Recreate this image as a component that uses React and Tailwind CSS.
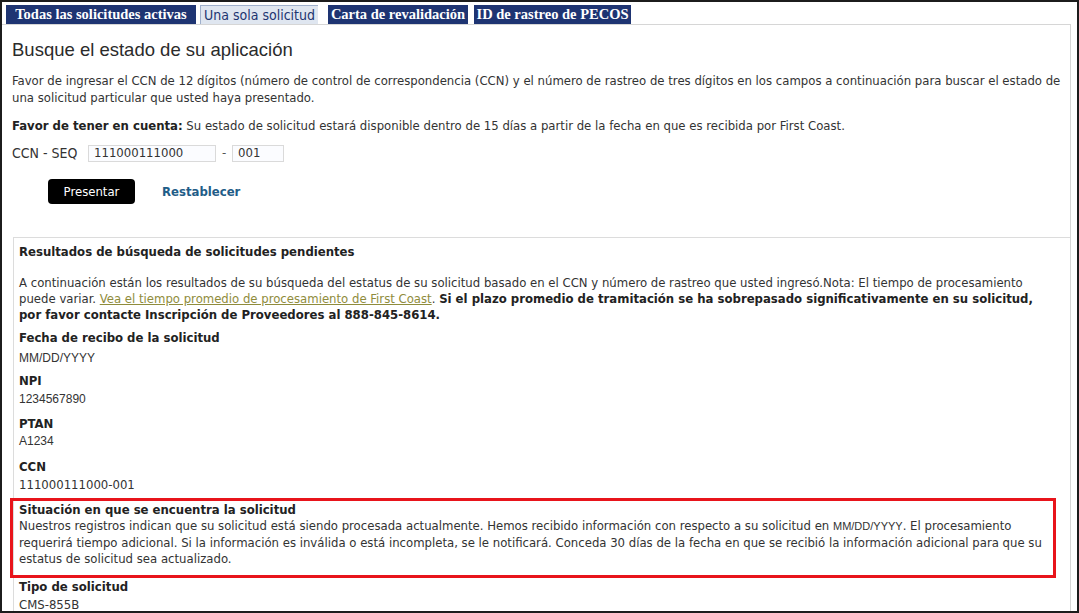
import React from "react";

const TABS = [
  { label: "Todas las solicitudes activas", w: "w-[190px]", active: false },
  { label: "Una sola solicitud", w: "w-[118px]", active: true },
  { label: "Carta de revalidación", w: "w-[140px]", active: false },
  { label: "ID de rastreo de PECOS", w: "w-[157px]", active: false },
];

const Field = ({ label, value, arial, top, gap }) => (
  <div className={top}>
    <div className="font-bold text-[13px] leading-[17px] text-[#222]">{label}</div>
    <div
      className={`${gap} text-[#333] leading-[17px] ${
        arial ? "font-['Liberation_Sans',sans-serif] text-[12px]" : "text-[13px]"
      }`}
    >
      {value}
    </div>
  </div>
);

export default function App() {
  return (
    <div className="w-[1079px] h-[613px] overflow-hidden bg-white border-2 border-[#1c1c1c] font-['DejaVu_Sans_Condensed','Liberation_Sans',sans-serif] text-[13px] text-[#333]">
      {/* tabs */}
      <div className="flex h-[22px] pt-[3px] pl-[4px]">
        {TABS.map((t, i) => (
          <div
            key={i}
            className={`${t.w} h-[19px] flex items-center justify-center whitespace-nowrap ${
              i === 1 ? "ml-[4px]" : i === 2 ? "ml-[10px]" : i === 3 ? "ml-[6px]" : ""
            } ${
              t.active
                ? "bg-[#dfe6f0] text-[#1d3570] border-l border-t border-[#9fb0cc] text-[14px]"
                : "bg-[#1e3472] text-white font-bold font-['Liberation_Serif',serif] text-[14.5px]"
            }`}
          >
            {t.label}
          </div>
        ))}
      </div>

      <div className="border-t border-r border-[#d6d6d6] mr-[6px] h-full">
        {/* search form */}
        <div className="pl-[10px]">
          <h1 className="mt-[14px] font-['Liberation_Sans',sans-serif] text-[18.5px] leading-[22px] text-[#2b2b2b]">
            Busque el estado de su aplicación
          </h1>
          <p className="mt-[11px] leading-[17px] pr-[4px]">
            Favor de ingresar el CCN de 12 dígitos (número de control de correspondencia (CCN) y el número de rastreo de tres dígitos en los campos a continuación para buscar el estado de una solicitud particular que usted haya presentado.
          </p>
          <p className="mt-[11px] leading-[17px]">
            <span className="font-bold text-[#222]">Favor de tener en cuenta:</span> Su estado de solicitud estará disponible dentro de 15 días a partir de la fecha en que es recibida por First Coast.
          </p>
          <div className="mt-[10px] flex items-center h-[18px]">
            <span className="w-[76px] text-[14px]">CCN - SEQ</span>
            <input
              readOnly
              value="111000111000"
              className="w-[128px] h-[17px] border border-[#dadada] bg-[#fbfcff] px-[5px] text-[13px] text-[#333] outline-none"
            />
            <span className="w-[16px] text-center text-[#555]">-</span>
            <input
              readOnly
              value="001"
              className="w-[52px] h-[17px] border border-[#dadada] bg-[#fbfcff] px-[5px] text-[13px] text-[#333] outline-none"
            />
          </div>
          <div className="mt-[17px] flex items-center">
            <button className="ml-[36px] w-[87px] h-[25px] rounded-[4px] bg-black text-white text-[13px]">
              Presentar
            </button>
            <span className="ml-[27px] font-bold text-[13px] text-[#1f5d88]">Restablecer</span>
          </div>
        </div>

        {/* results */}
        <div className="mt-[33px] ml-[11px] border-t border-l border-[#dcdcdc] pl-[5px] pt-[5px]">
          <h2 className="font-bold text-[13px] leading-[18px] text-[#222]">
            Resultados de búsqueda de solicitudes pendientes
          </h2>
          <p className="mt-[14px] leading-[16px] pr-[30px]">
            A continuación están los resultados de su búsqueda del estatus de su solicitud basado en el CCN y número de rastreo que usted ingresó.Nota: El tiempo de procesamiento puede variar.{" "}
            <a href="#" className="text-[#8f8c3c] underline">
              Vea el tiempo promedio de procesamiento de First Coast
            </a>
            .{" "}
            <b className="text-[#222]">
              Si el plazo promedio de tramitación se ha sobrepasado significativamente en su solicitud, por favor contacte Inscripción de Proveedores al 888-845-8614.
            </b>
          </p>

          <Field top="mt-[6px]" gap="mt-[4px]" label="Fecha de recibo de la solicitud" value="MM/DD/YYYY" arial />
          <Field top="mt-[5px]" gap="mt-[2px]" label="NPI" value="1234567890" arial />
          <Field top="mt-[7px]" gap="mt-[1px]" label="PTAN" value="A1234" arial />
          <Field top="mt-[8px]" gap="mt-[1px]" label="CCN" value="111000111000-001" />

          <div className="mt-[5px] -ml-[9px] w-[1046px] border-[3px] border-[#e8141b] pl-[6px] pr-[10px] pt-[1px] pb-[7px]">
            <div className="font-bold text-[13px] leading-[16px] text-[#222]">
              Situación en que se encuentra la solicitud
            </div>
            <p className="leading-[16.5px]">
              Nuestros registros indican que su solicitud está siendo procesada actualmente. Hemos recibido información con respecto a su solicitud en{" "}
              <span className="font-['Liberation_Sans',sans-serif] text-[11px]">MM/DD/YYYY</span>. El procesamiento requerirá tiempo adicional. Si la información es inválida o está incompleta, se le notificará. Conceda 30 días de la fecha en que se recibió la información adicional para que su estatus de solicitud sea actualizado.
            </p>
          </div>

          <div className="font-bold text-[13px] leading-[16px] text-[#222] mt-[1px]">Tipo de solicitud</div>
          <div className="leading-[16px] mt-[2px]">CMS-855B</div>
        </div>
      </div>
    </div>
  );
}
